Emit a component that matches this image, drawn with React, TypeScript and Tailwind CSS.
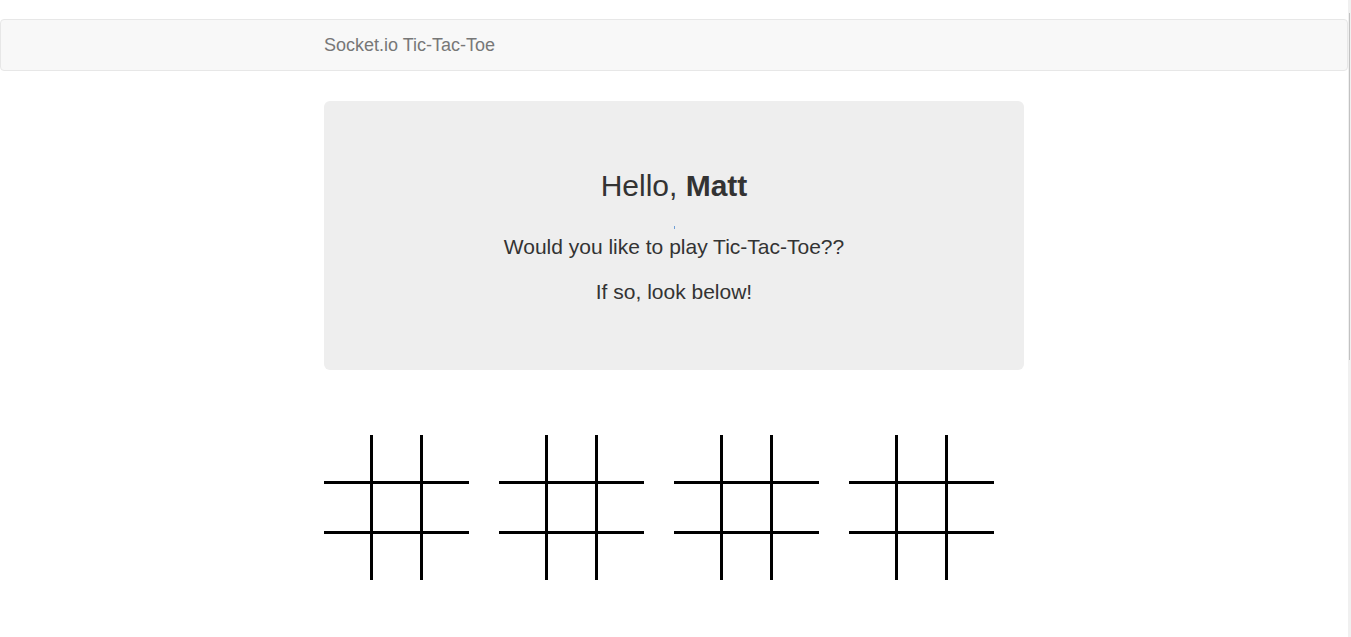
function Board() {
  const cells = Array.from({ length: 9 }, (_, i) => i);
  return (
    <div className="grid h-[145px] w-[145px] grid-cols-[49px_50px_46px] grid-rows-[49px_50px_46px]">
      {cells.map((i) => {
        const r = Math.floor(i / 3);
        const c = i % 3;
        return (
          <div
            key={i}
            className={`border-black ${c < 2 ? 'border-r-[3px]' : ''} ${r < 2 ? 'border-b-[3px]' : ''}`}
          />
        );
      })}
    </div>
  );
}

export default function App() {
  return (
    <div className="flex min-h-[637px] bg-white font-['Liberation_Sans',Arial,sans-serif] text-[14px] text-[#333]">
      <div className="flex-1 pt-[19px]">
        <nav className="h-[52px] rounded-[4px] border border-[#e7e7e7] bg-[#f8f8f8]">
          <div className="mx-auto w-[700px]">
            <span className="block py-[15px] text-[18px] leading-[20px] text-[#777]">Socket.io Tic-Tac-Toe</span>
          </div>
        </nav>

        <main className="mx-auto mt-[30px] w-[700px]">
          <div className="rounded-[6px] bg-[#eee] py-[48px] text-center">
            <h2 className="mt-[20px] mb-[10px] text-[30px] leading-[33px]">
              Hello, <b className="font-bold">Matt</b>
            </h2>
            <div className="flex h-[20px] justify-center pt-[14px]">
              <span className="h-[3px] w-px bg-[#6f9fd6]" />
            </div>
            <p className="mb-[15px] text-[21px] leading-[30px]">Would you like to play Tic-Tac-Toe??</p>
            <p className="mb-[15px] text-[21px] leading-[30px]">If so, look below!</p>
          </div>

          <div className="mt-[65px] flex gap-[30px]">
            {[0, 1, 2, 3].map((b) => (
              <Board key={b} />
            ))}
          </div>
        </main>
      </div>
      <div className="w-[3px] bg-[#f0f0f0] pt-[13px]">
        <div className="ml-px h-[347px] w-px bg-[#c2c2c2]" />
      </div>
    </div>
  );
}
